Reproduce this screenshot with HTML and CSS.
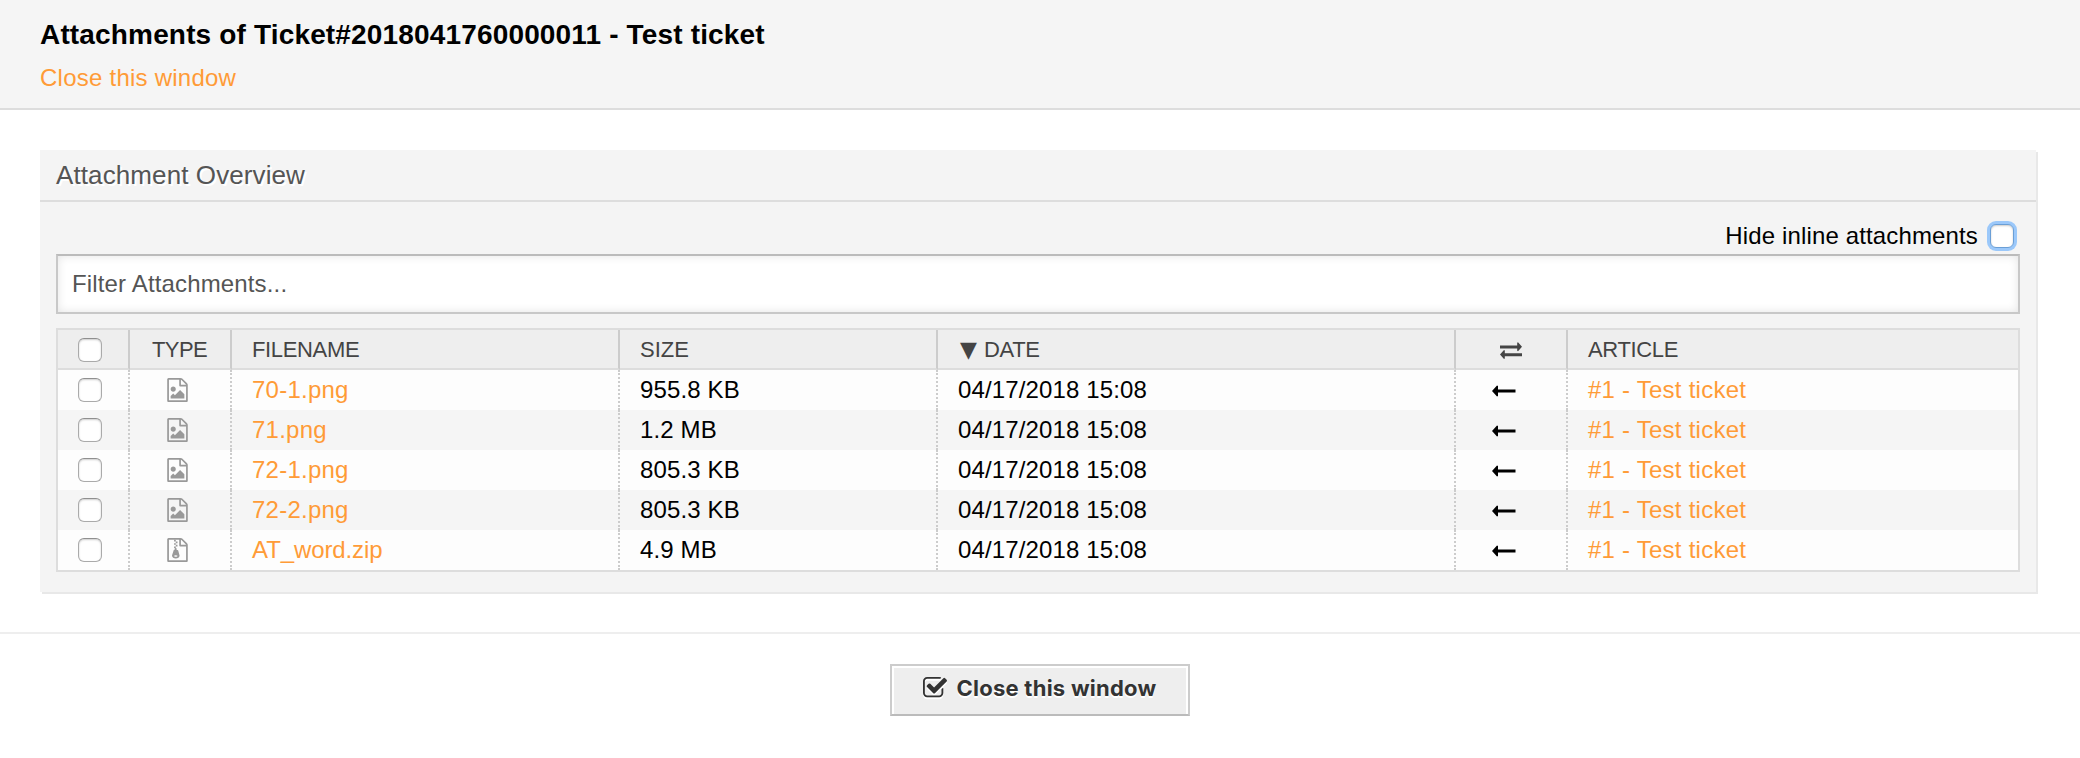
FILE: index.html
```html
<!DOCTYPE html>
<html lang="en">
<head>
<meta charset="utf-8">
<title>Attachments of Ticket#2018041760000011 - Test ticket</title>
<link rel="stylesheet" href="styles.css">
</head>
<body>
<svg class="sprite" aria-hidden="true">
  <symbol id="file-image" viewBox="0 0 1536 1792"><path d="M1468 380q28 28 48 76t20 88v1152q0 40-28 68t-68 28h-1344q-40 0-68-28t-28-68v-1600q0-40 28-68t68-28h896q40 0 88 20t76 48zm-444-244v376h376q-10-29-22-41l-313-313q-12-12-41-22zm384 1528v-1024h-416q-40 0-68-28t-28-68v-416h-768v1536h1280zm-128-448v320h-1024v-192l192-192 128 128 384-384zm-832-192q-80 0-136-56t-56-136 56-136 136-56 136 56 56 136-56 136-136 56z"/></symbol>
  <symbol id="file-zip" viewBox="0 0 1536 1792"><path fill-rule="evenodd" d="M1468 380q28 28 48 76t20 88v1152q0 40-28 68t-68 28h-1344q-40 0-68-28t-28-68v-1600q0-40 28-68t68-28h896q40 0 88 20t76 48zm-444-244v376h376q-10-29-22-41l-313-313q-12-12-41-22zm384 1528v-1024h-416q-40 0-68-28t-28-68v-416h-768v1536h1280z"/><path fill-rule="evenodd" d="M512 128h128v128h-128zM640 256h128v128h-128zM512 384h128v128h-128zM640 512h128v128h-128zM512 640h128v128h-128zM576 768h128v128h64q40 0 52 38l92 338q8 28 8 50 0 90-82 152t-198 62-198-62-82-152q0-22 8-50l120-378q10-32 44-32h52zM640 1280q-53 0-90.500 19t-37.500 45 37.500 45 90.500 19 90.500-19 37.500-45-37.500-45-90.500-19z"/></symbol>
  <symbol id="arrow-left" viewBox="0 0 24 12"><path d="M0 6 5 .6 6 1v3.400h17.500v3.200H6V11l-1 .4z"/></symbol>
</svg>

<header class="page-header">
  <h1>Attachments of Ticket#2018041760000011 - Test ticket</h1>
  <a class="link" href="#">Close this window</a>
</header>

<main class="content">
  <section class="widget">
    <h2>Attachment Overview</h2>
    <div class="widget-body">
      <label class="hide-inline">Hide inline attachments <input class="check focused" type="checkbox"></label>
      <input class="filter" type="text" placeholder="Filter Attachments...">
      <table class="overview">
        <colgroup><col class="c-check"><col class="c-type"><col class="c-file"><col class="c-size"><col class="c-date"><col class="c-dir"><col class="c-article"></colgroup>
        <thead>
          <tr>
            <th class="sel"><input class="check" type="checkbox"></th>
            <th class="type">TYPE</th>
            <th>FILENAME</th>
            <th class="size">SIZE</th>
            <th><span class="sort">▼</span>DATE</th>
            <th class="dir"><svg class="exchange" viewBox="0 0 22 17"><path d="M0 3.500h17.200V.8L18 .3 22 4.800 18 9.300l-.8-.5V6.500H0zM22 11.200H4.800V8.600L4 8.100 0 12.600 4 17l.8-.4v-2.300H22z"/></svg></th>
            <th>ARTICLE</th>
          </tr>
        </thead>
        <tbody>
          <tr>
            <td class="sel"><input class="check" type="checkbox"></td>
            <td class="type"><svg class="file"><use href="#file-image"/></svg></td>
            <td><a class="link" href="#">70-1.png</a></td><td>955.8 KB</td><td>04/17/2018 15:08</td>
            <td class="dir"><svg class="arrow"><use href="#arrow-left"/></svg></td>
            <td><a class="link" href="#">#1 - Test ticket</a></td>
          </tr>
          <tr>
            <td class="sel"><input class="check" type="checkbox"></td>
            <td class="type"><svg class="file"><use href="#file-image"/></svg></td>
            <td><a class="link" href="#">71.png</a></td><td>1.2 MB</td><td>04/17/2018 15:08</td>
            <td class="dir"><svg class="arrow"><use href="#arrow-left"/></svg></td>
            <td><a class="link" href="#">#1 - Test ticket</a></td>
          </tr>
          <tr>
            <td class="sel"><input class="check" type="checkbox"></td>
            <td class="type"><svg class="file"><use href="#file-image"/></svg></td>
            <td><a class="link" href="#">72-1.png</a></td><td>805.3 KB</td><td>04/17/2018 15:08</td>
            <td class="dir"><svg class="arrow"><use href="#arrow-left"/></svg></td>
            <td><a class="link" href="#">#1 - Test ticket</a></td>
          </tr>
          <tr>
            <td class="sel"><input class="check" type="checkbox"></td>
            <td class="type"><svg class="file"><use href="#file-image"/></svg></td>
            <td><a class="link" href="#">72-2.png</a></td><td>805.3 KB</td><td>04/17/2018 15:08</td>
            <td class="dir"><svg class="arrow"><use href="#arrow-left"/></svg></td>
            <td><a class="link" href="#">#1 - Test ticket</a></td>
          </tr>
          <tr>
            <td class="sel"><input class="check" type="checkbox"></td>
            <td class="type"><svg class="file"><use href="#file-zip"/></svg></td>
            <td><a class="link tight" href="#">AT_word.zip</a></td><td>4.9 MB</td><td>04/17/2018 15:08</td>
            <td class="dir"><svg class="arrow"><use href="#arrow-left"/></svg></td>
            <td><a class="link" href="#">#1 - Test ticket</a></td>
          </tr>
        </tbody>
      </table>
    </div>
  </section>
</main>

<footer class="page-footer">
  <button class="close-button" type="button">
    <svg class="check-icon" viewBox="0 0 1664 1792"><path d="M1408 930v318q0 119-84.500 203.500t-203.500 84.500h-832q-119 0-203.500-84.500t-84.500-203.500v-832q0-119 84.500-203.500t203.500-84.500h832q63 0 117 25 15 7 18 23 3 17-9 29l-49 49q-10 10-23 10-3 0-9-2-23-6-45-6h-832q-66 0-113 47t-47 113v832q0 66 47 113t113 47h832q66 0 113-47t47-113v-254q0-13 9-22l64-64q10-10 23-10 6 0 12 3 20 8 20 29zm231-489l-814 814q-24 24-57 24t-57-24l-430-430q-24-24-24-57t24-57l110-110q24-24 57-24t57 24l263 263 647-647q24-24 57-24t57 24l110 110q24 24 24 57t-24 57z"/></svg>
    <span>Close this window</span>
  </button>
</footer>
</body>
</html>
```
FILE: styles.css
```css
* { box-sizing: border-box; }

body {
  margin: 0;
  background: #fff;
  color: #000;
  font: 24px/40px "Liberation Sans", Arial, sans-serif;
  letter-spacing: 0.14px;
}

.sprite { display: none; }

.link { color: #ff9b37; text-decoration: none; letter-spacing: 0.24px; }
.link.tight { letter-spacing: -0.1px; }

.page-header {
  height: 110px;
  padding: 19px 40px 0;
  background: #f5f5f5;
  border-bottom: 2px solid #ddd;
}

.page-header h1 {
  margin: 0 0 7px;
  font-size: 28px;
  line-height: 32px;
  letter-spacing: 0.16px;
}

.page-header .link { display: block; }

.content { padding: 40px 44px 40px 40px; }

.widget {
  height: 442px;
  background: #f4f4f4;
  box-shadow: 2px 2px 0 #e8e8e8;
}

.widget h2 {
  height: 52px;
  margin: 0;
  padding-left: 16px;
  border-bottom: 2px solid #ddd;
  color: #555;
  font-size: 26px;
  font-weight: normal;
  line-height: 50px;
  letter-spacing: 0.1px;
  text-shadow: 2px 2px 0 #fff;
}

.widget-body { padding: 14px 16px 20px; }

.hide-inline {
  display: flex;
  justify-content: flex-end;
  align-items: center;
  gap: 12px;
  height: 38px;
  padding: 2px 6px 0 0;
}

.check {
  appearance: none;
  flex: none;
  display: block;
  width: 24px;
  height: 24px;
  margin: 0;
  border: 1px solid #aaa;
  border-top-color: #8f8f8f;
  border-radius: 6px;
  background: #fff;
  box-shadow: inset 0 1px 2px #ccc;
}

.focused {
  border-color: #6b9fd6;
  box-shadow: 0 0 0 3px #9bc8fa, inset 0 1px 2px #ccc;
}

.filter {
  display: block;
  width: 100%;
  height: 60px;
  margin: 0 0 14px;
  padding: 0 14px;
  border: 2px solid #c8c8c8;
  border-top-color: #bbb;
  background: #fff;
  box-shadow: inset 0 0 10px #e4e4e4;
  font: inherit;
  letter-spacing: 0.15px;
}

.filter::placeholder { color: #555; opacity: 1; }

.overview {
  width: 100%;
  table-layout: fixed;
  border: 2px solid #ddd;
  border-spacing: 0;
}

.c-check { width: 72px; }
.c-type { width: 102px; }
.c-file { width: 388px; }
.c-size { width: 318px; }
.c-date { width: 518px; }
.c-dir { width: 112px; }

.overview th,
.overview td {
  height: 40px;
  padding: 0 0 0 20px;
  line-height: 40px;
  text-align: left;
  white-space: nowrap;
}

.overview th {
  padding-top: 1px;
  border-right: 2px solid #ccc;
  border-bottom: 2px solid #ddd;
  background: #eee;
  color: #444;
  font-size: 22px;
  font-weight: normal;
  line-height: 37px;
  letter-spacing: -0.35px;
}

.overview td { border-right: 2px dotted #ccc; background: #fdfdfd; }
.overview tr:nth-child(even) td { background: #f5f5f5; }
.overview th:last-child,
.overview td:last-child { border-right: 0; }
.overview th.sel { padding-top: 2px; }
.overview th.type { padding-left: 22px; letter-spacing: -0.6px; }
.overview th.size { letter-spacing: 0; }
.overview td.type { padding-left: 37px; }
.overview td.dir { padding-left: 36px; }
.overview th.dir { padding-left: 44px; }

.sort {
  display: inline-block;
  width: 26px;
  padding-left: 2px;
  font: 22px/20px "DejaVu Sans", sans-serif;
}

.file, .arrow, .exchange { display: block; }
.file { width: 21px; height: 24px; margin-top: -1px; fill: #999; }
.arrow { width: 24px; height: 12px; margin-top: 2px; fill: #000; }
.exchange { width: 22px; height: 17px; margin-top: 2px; fill: #444; }

.page-footer {
  padding-top: 30px;
  border-top: 2px solid #eee;
}

.close-button {
  display: flex;
  align-items: center;
  justify-content: center;
  gap: 9px;
  width: 300px;
  height: 52px;
  margin: 0 auto;
  padding: 0 0 4px;
  border: 2px solid #ccc;
  border-bottom-color: #bbb;
  background: #eee;
  box-shadow: inset 2px 2px 0 #fff, inset -2px 0 0 #fff;
  color: #333;
  font: 700 22px/28px Inter, sans-serif;
  letter-spacing: 0.25px;
  text-shadow: 0 2px 0 #fff;
}

.check-icon {
  width: 24px;
  height: 26px;
  fill: #333;
  filter: drop-shadow(0 2px 0 #fff);
}
```
